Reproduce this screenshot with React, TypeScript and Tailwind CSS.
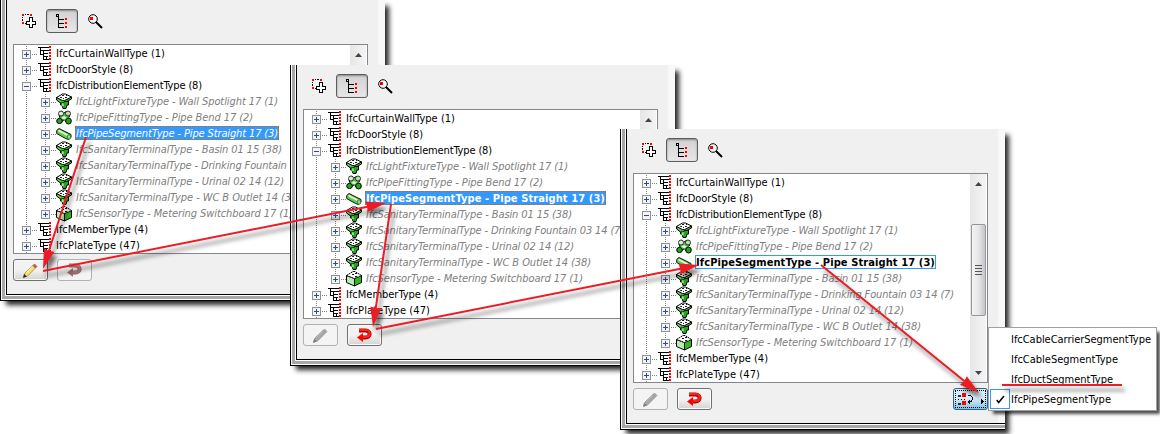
import { useLayoutEffect, useRef, useState } from 'react'
import clsx from 'clsx'

type IconKind = 'type' | 'fixture' | 'fitting' | 'pipe' | 'sensor'

interface TreeItem {
  label: string
  width: number
  level: 1 | 2
  icon: IconKind
  open?: boolean
  last?: boolean
}

const ITEMS: TreeItem[] = [
  { label: 'IfcCurtainWallType (1)', width: 109, level: 1, icon: 'type' },
  { label: 'IfcDoorStyle (8)', width: 77, level: 1, icon: 'type' },
  { label: 'IfcDistributionElementType (8)', width: 146, level: 1, icon: 'type', open: true },
  { label: 'IfcLightFixtureType - Wall Spotlight 17 (1)', width: 202, level: 2, icon: 'fixture' },
  { label: 'IfcPipeFittingType - Pipe Bend 17 (2)', width: 177, level: 2, icon: 'fitting' },
  { label: 'IfcPipeSegmentType - Pipe Straight 17 (3)', width: 202, level: 2, icon: 'pipe' },
  { label: 'IfcSanitaryTerminalType - Basin 01 15 (38)', width: 206, level: 2, icon: 'fixture' },
  { label: 'IfcSanitaryTerminalType - Drinking Fountain 03 14 (7)', width: 258, level: 2, icon: 'fixture' },
  { label: 'IfcSanitaryTerminalType - Urinal 02 14 (12)', width: 208, level: 2, icon: 'fixture' },
  { label: 'IfcSanitaryTerminalType - WC B Outlet 14 (38)', width: 225, level: 2, icon: 'fixture' },
  { label: 'IfcSensorType - Metering Switchboard 17 (1)', width: 217, level: 2, icon: 'sensor', last: true },
  { label: 'IfcMemberType (4)', width: 92, level: 1, icon: 'type' },
  { label: 'IfcPlateType (47)', width: 84, level: 1, icon: 'type' },
]

const SELECTED = 5

// Text tracked so that it fills the given width
function Label({ text, width, className }: { text: string; width: number; className?: string }) {
  const ref = useRef<HTMLSpanElement>(null)
  const [spacing, setSpacing] = useState(0)

  useLayoutEffect(() => {
    if (!ref.current) return
    const natural = ref.current.getBoundingClientRect().width - spacing * text.length
    setSpacing((width - natural) / text.length)
  }, [text, width])

  return (
    <span ref={ref} className={clsx('whitespace-pre', className)} style={{ letterSpacing: `${spacing}px` }}>
      {text}
    </span>
  )
}

function Gutter({ item }: { item: TreeItem }) {
  const child = item.level === 2
  const x = child ? 27 : 8
  return (
    <svg
      width={child ? 42 : 24}
      height="16"
      className="shrink-0"
      shapeRendering="crispEdges"
      fill="none"
    >
      <g stroke="#808080" strokeDasharray="1 1">
        <path d="M12.5 1V16" />
        {child && <path d={item.last ? 'M31.5 1V10' : 'M31.5 1V16'} />}
        <path d={child ? 'M37 9.5H42' : 'M18 9.5H24'} />
      </g>
      <rect x={x + 0.5} y="5.5" width="8" height="8" fill="#f4f4f4" stroke="#919191" />
      <path d={`M${x + 2} 9.5h5`} stroke="#2b4b9b" />
      {!item.open && <path d={`M${x + 4.5} 7v5`} stroke="#2b4b9b" />}
    </svg>
  )
}

function ItemIcon({ kind }: { kind: IconKind }) {
  switch (kind) {
    case 'type':
      return (
        <svg width="14" height="16" className="shrink-0" shapeRendering="crispEdges" fill="none">
          <path
            d="M0 2.5h11M2.5 2v8M2 9.5h3M5.5 5v10M3 5.5h8M5 8.5h5M5 11.5h5M8.5 11v4M5 14.5h6"
            stroke="#000"
          />
          <path d="M12 1V16" stroke="#f00" strokeWidth="2" strokeDasharray="2 1" />
        </svg>
      )
    case 'fixture':
      return (
        <svg width="16" height="16" className="shrink-0 overflow-visible">
          <path d="M4.5 9v3h1.500l1 3.500h3l1-3.500h1.500V8z" fill="#23a81c" stroke="#000" />
          <path d="M.5 4.500V7l4 3h3l1-1.500h2.500L15.500 6V4z" fill="#3fc02c" stroke="#000" />
          <path d="M.5 4.500L6.500 1h3l6 3L8.500 7.500h-2z" fill="#fff" stroke="#000" />
          <path d="M6 2.500h2M9 4.500h2M4 4.500h2M7 5.500h1M10 2.500h1" stroke="#222" shapeRendering="crispEdges" />
          <path d="M6 10.500h1.500V13H6zM2 6.500l3 2" fill="#9be887" stroke="#8be079" strokeWidth=".6" />
        </svg>
      )
    case 'fitting':
      return (
        <svg width="16" height="16" className="shrink-0 overflow-visible">
          <path d="M3 6l2-4 3 2 3-2 3 3-1 4-3 4-2-2-3 2H3L1 11l3-2z" fill="#5cb84b" stroke="#000" strokeDasharray="3 1" />
          <circle cx="5" cy="4.500" r="2.500" fill="#d8f2d3" stroke="#111" strokeWidth=".8" />
          <circle cx="12" cy="4.500" r="2.500" fill="#b5e5aa" stroke="#111" strokeWidth=".8" />
          <ellipse cx="3.500" cy="12" rx="2.800" ry="2.600" fill="#23a81c" stroke="#000" />
          <ellipse cx="12.500" cy="12" rx="2.800" ry="3" fill="#23a81c" stroke="#000" />
          <path d="M5 9l3-2 3 2-3 1z" fill="#e7f8e4" />
        </svg>
      )
    case 'pipe':
      return (
        <svg width="16" height="16" className="shrink-0 overflow-visible">
          <path d="M.7 5.500L3 3.500l12 6v3l-2.500 2-3-1L.7 8.500z" fill="#5fce4b" stroke="#111" />
          <path d="M2.500 5.500l9 4.800" stroke="#e0f8da" strokeWidth="1.800" />
          <ellipse cx="13" cy="12" rx="1.700" ry="2.200" fill="#8fe37d" stroke="#2b7c20" strokeWidth=".8" />
        </svg>
      )
    case 'sensor':
      return (
        <svg width="16" height="16" className="shrink-0 overflow-visible">
          <path d="M.5 5.500l8 3v7.500l-8-3.500z" fill="#b9efad" stroke="#000" />
          <path d="M8.500 8.500l7-3v7l-7 3.500z" fill="#2eb81f" stroke="#000" />
          <path d="M.5 5.500L7 1.500h2l6.500 4-7 3z" fill="#fff" stroke="#000" strokeDasharray="2 .6" />
          <path d="M6 4.500h2M9 3.500h2M9 6.500h2" stroke="#111" shapeRendering="crispEdges" />
        </svg>
      )
  }
}

function TreeRow({ item, state }: { item: TreeItem; state?: 'italic' | 'bold' | 'outline' }) {
  const bold = state === 'bold' || state === 'outline'
  return (
    <div className="flex h-4 items-center">
      <Gutter item={item} />
      <ItemIcon kind={item.icon} />
      <div
        className={clsx(
          'ml-[3px] h-[14px] shrink-0 px-px leading-4',
          item.level === 1 && 'text-black',
          item.level === 2 && !state && 'text-[#808080] italic',
          state === 'italic' && 'bg-[#3399ff] text-white italic outline outline-dotted -outline-offset-1 outline-[#cc6600]',
          state === 'bold' && 'bg-[#3399ff] font-bold text-white outline outline-dotted -outline-offset-1 outline-[#cc6600]',
          state === 'outline' && 'font-bold text-black outline -outline-offset-1 outline-[#3399ff]',
        )}
      >
        <Label text={item.label} width={bold ? 239 : item.width} />
      </div>
    </div>
  )
}

function ScrollBar() {
  return (
    <div className="mr-px flex w-4 shrink-0 flex-col items-center bg-gradient-to-r from-[#e6e6e6] to-[#f4f4f4] pt-[8px]">
      <svg width="7" height="4">
        <path d="M0 4L3.500 0L7 4z" fill="#444" />
      </svg>
      <div className="mt-[38px] flex h-[92px] w-[15px] items-center justify-center rounded-xs border border-[#979797] bg-gradient-to-r from-[#f5f5f5] via-[#e6e6e9] to-[#c4c5c9]">
        <svg width="7" height="10" shapeRendering="crispEdges">
          <path d="M0 .5h7M0 3.500h7M0 6.500h7M0 9.500h7" stroke="#555" />
        </svg>
      </div>
      <svg width="7" height="4" className="mt-[55px]">
        <path d="M0 0h7L3.500 4z" fill="#444" />
      </svg>
    </div>
  )
}

function SelectIcon() {
  return (
    <svg width="15" height="15" fill="none" shapeRendering="crispEdges">
      <path d="M0 0h2v2H0zM8 0h2v2H8zM0 8h2v2H0z" fill="#f00" />
      <path d="M3 .5h1M5 .5h2M9.500 3v1M.5 3v1M.5 5v2M3 9.500h1" stroke="#000" />
      <path d="M7.500 3.500h3v4h3v3h-3v3h-3v-3h-3v-3h3z" fill="#fff" stroke="#000" />
    </svg>
  )
}

function TreeIcon() {
  return (
    <svg width="12" height="15" fill="none" shapeRendering="crispEdges">
      <path d="M.5 .5h2v2h-2zM2.500 3v11M2 5.500h6M2 9.500h6M2 13.500h6" stroke="#000" />
      <path d="M9 4h2v2H9zM9 8h2v2H9zM9 12h2v2H9z" fill="#f00" />
    </svg>
  )
}

function SearchIcon() {
  return (
    <svg width="15" height="15" fill="none">
      <path d="M8 8l6 6" stroke="#000" strokeWidth="2" />
      <circle cx="5" cy="5" r="4.300" fill="#f8f8f8" stroke="#000" />
      <path d="M2 3h3v3H2z" fill="#f00" />
    </svg>
  )
}

function PencilIcon({ disabled }: { disabled: boolean }) {
  return (
    <svg width="15" height="15" fill="none">
      <path
        d="M.8 14l1.200-4L10 2.500l2.500 2.500-8 8z"
        fill={disabled ? '#a7a7a4' : '#f8df6b'}
        stroke={disabled ? '#939390' : '#a28237'}
        strokeWidth=".8"
      />
      <path d="M3.500 9.500l7-6.500" stroke={disabled ? '#b9b9b5' : '#fff9c5'} />
      <path
        d="M10 2.500L11.500 1l2.500 2.500-1.500 1.500z"
        fill={disabled ? '#a7a7a4' : '#e84b40'}
        stroke={disabled ? '#969692' : '#a54'}
        strokeWidth=".7"
      />
      <path d="M9 3.500l2.500 2.500" stroke={disabled ? '#a7a7a4' : '#c6d2df'} />
      <path d="M0 15l1-4 3 2.500z" fill={disabled ? '#7d7d7a' : '#302820'} />
    </svg>
  )
}

function UndoIcon({ disabled }: { disabled: boolean }) {
  return (
    <svg width="15" height="14" fill="none">
      <path
        d="M2 2.500h6.500c5.500 0 5.500 7 0 7H5"
        stroke={disabled ? '#9c6c6c' : '#b50000'}
        strokeWidth="4"
      />
      <path
        d="M2 2h6.500c5.500 0 5.500 7 0 7H6"
        stroke={disabled ? '#b48484' : '#ff2018'}
        strokeWidth="2.200"
      />
      <path d="M6 5v9L0 9.500z" fill={disabled ? '#a97676' : '#f00'} />
    </svg>
  )
}

function PushButton({ disabled, children }: { disabled: boolean; children: React.ReactNode }) {
  return (
    <div
      className={clsx(
        'flex h-[22px] w-[35px] items-center justify-center rounded-[3px] border',
        disabled
          ? 'border-[#adb2b5] bg-[#f4f4f4]'
          : 'border-[#707070] bg-gradient-to-b from-[#f2f2f2] from-50% to-[#d3d3d3] shadow-[inset_0_0_0_1px_#fbfbfb]',
      )}
    >
      {children}
    </div>
  )
}

interface WindowProps {
  className: string
  state: 'italic' | 'bold' | 'outline'
}

function BrowserWindow({ className, state }: WindowProps) {
  const edited = state !== 'italic'
  return (
    <div
      className={clsx(
        'absolute h-[301px] w-[385px] border-b border-l border-black bg-white pb-px pl-px shadow-[5px_5px_5px_-1px_rgba(0,0,0,0.85)]',
        className,
      )}
    >
      <div className="h-full border-b-3 border-l-3 border-[#a7a7a7] bg-white pb-px pl-px">
        <div className="h-full border-b border-l border-black">
          <div className="h-full border-r-7 border-[#f8f8f8] bg-[#f0f0f0] pl-1.5">
            {/* Toolbar */}
            <div className="flex h-11 items-start pt-[9px] pl-[9px]">
              <div className="mt-[5px] w-6">
                <SelectIcon />
              </div>
              <div className="flex h-6 w-8 items-center justify-center rounded-[3px] border border-[#5c5c5c] bg-gradient-to-b from-[#d2d2d2] to-[#e7e7e7] shadow-[inset_0_1px_2px_#888]">
                <TreeIcon />
              </div>
              <div className="mt-[5px] ml-2.5">
                <SearchIcon />
              </div>
            </div>

            {/* Type tree */}
            <div className="flex h-[210px] w-[355px] border border-[#828790] bg-white">
              <div className="w-[336px] shrink-0 overflow-hidden">
                {ITEMS.map((item, i) => (
                  <TreeRow key={item.label} item={item} state={i === SELECTED ? state : undefined} />
                ))}
              </div>
              <ScrollBar />
            </div>

            {/* Actions */}
            <div className="mt-[5px] flex w-[355px] gap-[9px]">
              <PushButton disabled={edited}>
                <PencilIcon disabled={edited} />
              </PushButton>
              <PushButton disabled={!edited}>
                <UndoIcon disabled={!edited} />
              </PushButton>
              {state === 'outline' && (
                <div className="ml-auto flex h-[22px] w-[35px] rounded-[3px] border border-[#2c628b] bg-gradient-to-b from-[#d9effb] from-45% to-[#7fc0e2] p-px">
                  <div className="flex flex-1 items-center justify-center border border-dotted border-black">
                    <svg width="27" height="14" fill="none" shapeRendering="crispEdges">
                      <path d="M1 3h3v2H1zM1 11h3v2H1z" fill="#333" />
                      <path d="M5 1h4v4H5zM5 9h4v4H5z" fill="#f00" />
                      <path d="M1 7.500h8" stroke="#000" strokeDasharray="1 2" />
                      <path d="M11 3.500h3M14.500 4v1M15.500 5v3M14.500 8v1M12 9.500h3" stroke="#000" />
                      <path d="M13 7v6l-3-3z" fill="#000" />
                      <path d="M24 6v7l3-3.500z" fill="#000" />
                    </svg>
                  </div>
                </div>
              )}
            </div>
          </div>
        </div>
      </div>
    </div>
  )
}

const MENU = [
  { label: 'IfcCableCarrierSegmentType', width: 140 },
  { label: 'IfcCableSegmentType', width: 107 },
  { label: 'IfcDuctSegmentType', width: 102 },
  { label: 'IfcPipeSegmentType', width: 100, checked: true },
]

function TypeMenu() {
  return (
    <div className="absolute top-[327px] left-[988px] h-[84px] w-[169px] border border-[#a0a0a0] bg-white py-px pl-px shadow-[4px_4px_3px_-1px_rgba(0,0,0,0.7)]">
      {MENU.map((entry) => (
        <div key={entry.label} className="flex h-5 items-center">
          <div
            className={clsx(
              'mr-px flex size-5 items-center justify-center border',
              entry.checked ? 'border-[#3399ff]' : 'border-transparent',
            )}
          >
            {entry.checked && (
              <svg width="9" height="9" fill="none">
                <path d="M.7 5l2 2.500L8 1" stroke="#000" strokeWidth="1.500" />
              </svg>
            )}
          </div>
          <Label text={entry.label} width={entry.width} className="pt-0.5 text-black" />
        </div>
      ))}
    </div>
  )
}

// Each arrow runs from (x1, y1) to its tip at (x2, y2)
const ARROWS = [
  [86, 137, 43, 269],
  [43, 271, 386, 203],
  [391, 204, 373, 327],
  [376, 329, 699, 265],
  [821, 265, 979, 393],
]

function Arrows() {
  return (
    <svg
      width="1160"
      height="434"
      className="pointer-events-none absolute inset-0 drop-shadow-[3px_5px_2px_rgba(0,0,0,0.55)]"
    >
      {ARROWS.map(([x1, y1, x2, y2]) => {
        const length = Math.hypot(x2 - x1, y2 - y1)
        const angle = (Math.atan2(y2 - y1, x2 - x1) * 180) / Math.PI
        return (
          <g key={x1} transform={`translate(${x1} ${y1}) rotate(${angle})`} fill="#ed1c24">
            <path d={`M0 -1H${length - 15}V1H0z`} />
            <path d={`M${length} 0L${length - 20} -5.500L${length - 19} 0L${length - 20} 5.500z`} />
          </g>
        )
      })}
      <path d="M1002 385H1122" stroke="#ed1c24" strokeWidth="2" />
    </svg>
  )
}

export default function App() {
  return (
    <div className="relative h-[434px] w-[1160px] overflow-hidden bg-white font-['DejaVu_Sans_Condensed','DejaVu_Sans',sans-serif] text-[11px] leading-[14px]">
      <BrowserWindow className="top-0 left-0" state="italic" />
      <BrowserWindow className="top-[65px] left-[290px]" state="bold" />
      <BrowserWindow className="top-[129px] left-[620px]" state="outline" />
      <TypeMenu />
      <Arrows />
    </div>
  )
}
